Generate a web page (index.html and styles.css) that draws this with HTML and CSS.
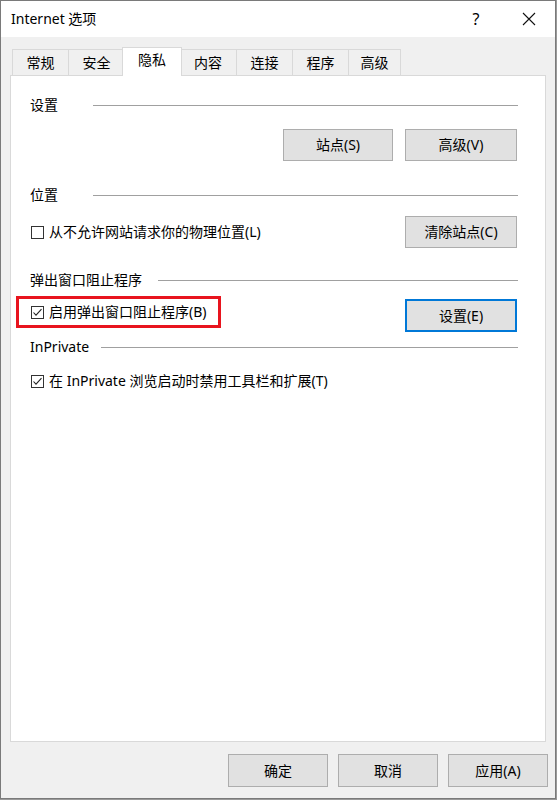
FILE: index.html
```html
<!DOCTYPE html>
<html lang="zh-CN">
<head>
<meta charset="utf-8">
<title>Internet 选项</title>
<link rel="stylesheet" href="styles.css">
</head>
<body>
<div class="window">
  <div class="titlebar">
    <span class="title">Internet 选项</span>
    <span class="help">?</span>
    <span class="close"><svg width="14" height="14" viewBox="0 0 14 14"><path d="M1 1 L13 13 M13 1 L1 13" stroke="#111" stroke-width="1.1" fill="none"/></svg></span>
  </div>
  <div class="client">
    <div class="tabs">
      <div class="tab">常规</div>
      <div class="tab">安全</div>
      <div class="tab active">隐私</div>
      <div class="tab">内容</div>
      <div class="tab">连接</div>
      <div class="tab">程序</div>
      <div class="tab last">高级</div>
    </div>
    <div class="panel">
      <div class="group-head"><span class="label wide">设置</span><span class="rule"></span></div>
      <div class="btn-row">
        <button class="btn site">站点(S)</button>
        <button class="btn">高级(V)</button>
      </div>

      <div class="group-head head-loc"><span class="label wide">位置</span><span class="rule"></span></div>
      <div class="opt-row row-loc">
        <label class="check"><span class="box"></span><span>从不允许网站请求你的物理位置(L)</span></label>
        <button class="btn">清除站点(C)</button>
      </div>

      <div class="group-head head-popup"><span class="label gap16">弹出窗口阻止程序</span><span class="rule"></span></div>
      <div class="opt-row row-popup">
        <label class="check highlight"><span class="box checked"><svg width="13" height="13" viewBox="0 0 13 13"><path d="M2.5 6.5 L5 9.2 L10.5 3.2" stroke="#222" stroke-width="1.1" fill="none"/></svg></span><span>启用弹出窗口阻止程序(B)</span></label>
        <button class="btn focused">设置(E)</button>
      </div>

      <div class="group-head head-private"><span class="label gap12">InPrivate</span><span class="rule"></span></div>
      <div class="opt-row row-private">
        <label class="check"><span class="box checked"><svg width="13" height="13" viewBox="0 0 13 13"><path d="M2.5 6.5 L5 9.2 L10.5 3.2" stroke="#222" stroke-width="1.1" fill="none"/></svg></span><span>在 InPrivate 浏览启动时禁用工具栏和扩展(T)</span></label>
      </div>
    </div>
    <div class="footer">
      <button class="btn foot">确定</button>
      <button class="btn foot">取消</button>
      <button class="btn foot">应用(A)</button>
    </div>
  </div>
</div>
</body>
</html>
```

FILE: styles.css
```css
* { box-sizing: border-box; }
html, body { margin: 0; padding: 0; }
body {
  background: #9a9a9a;
  width: 557px;
  height: 800px;
  font-family: "Noto Sans", "Noto Sans CJK SC", sans-serif;
  font-size: 14px;
  color: #000;
}
.window {
  width: 556px;
  height: 799px;
  border: 1px solid #7a7a7a;
  background: #f0f0f0;
  display: flex;
  flex-direction: column;
}
.titlebar {
  height: 36px;
  background: #fff;
  display: flex;
  align-items: center;
  padding-left: 10px;
  padding-right: 3px;
  flex-shrink: 0;
}
.title { line-height: 20px; }
.help {
  margin-left: auto;
  width: 40px;
  text-align: center;
  font-size: 16px;
  line-height: 20px;
  margin-right: 10px;
}
.close {
  width: 46px;
  height: 36px;
  display: flex;
  align-items: center;
  justify-content: center;
}
.client {
  flex: 1;
  display: flex;
  flex-direction: column;
}
.tabs {
  display: flex;
  align-items: flex-end;
  height: 38px;
  padding-top: 10px;
  margin-left: 11px;
}
.tab {
  width: 56px;
  height: 26px;
  border: 1px solid #d9d9d9;
  border-bottom: none;
  border-right: none;
  background: #f0f0f0;
  display: flex;
  align-items: center;
  justify-content: center;
  line-height: 20px;
  padding-top: 1px;
}
.tab.last { border-right: 1px solid #d9d9d9; width: 53px; }
.tab.active {
  width: 60px;
  height: 29px;
  margin: 0 -2px -1px -2px;
  background: #fff;
  border-right: 1px solid #d9d9d9;
  position: relative;
  z-index: 1;
  padding-top: 0;
  padding-bottom: 4px;
}
.tab.active + .tab { border-left: none; }
.panel {
  margin-left: 9px;
  width: 536px;
  height: 667px;
  background: #fff;
  border: 1px solid #d9d9d9;
  padding: 19px 28px 0 19px;
  display: flex;
  flex-direction: column;
}
.group-head {
  display: flex;
  align-items: center;
  height: 20px;
  margin-right: -1px;
}
.label { line-height: 20px; white-space: nowrap; }
.label.wide { width: 63px; }
.label.gap16 { margin-right: 16px; }
.label.gap12 { margin-right: 12px; }
.rule {
  flex: 1;
  height: 1px;
  background: #a0a0a0;
}
.btn {
  font-family: inherit;
  font-size: 14px;
  color: #000;
  background: #e1e1e1;
  border: 1px solid #adadad;
  border-radius: 0;
  height: 32px;
  width: 112px;
  padding: 0;
  line-height: 20px;
  margin: 0;
}
.btn.site { width: 110px; }
.btn.focused {
  border: 2px solid #0078d7;
  height: 33px;
}
.btn-row {
  display: flex;
  justify-content: flex-end;
  gap: 12px;
  margin-top: 14px;
}
.head-loc { margin-top: 24px; }
.opt-row {
  display: flex;
  justify-content: space-between;
  align-items: center;
}
.row-loc { margin-top: 11px; }
.head-popup { margin-top: 22px; }
.row-popup { margin-top: 9px; align-items: flex-start; }
.head-private { margin-top: 5px; }
.row-private { margin-top: 14px; }
.check {
  display: flex;
  align-items: center;
  gap: 5px;
  line-height: 20px;
  margin-left: 1px;
  white-space: nowrap;
}
.box {
  width: 13px;
  height: 13px;
  border: 1px solid #333;
  background: #fff;
  position: relative;
  flex-shrink: 0;
}
.box svg {
  position: absolute;
  left: -1px;
  top: -1px;
}
.check.highlight {
  border: 3px solid #e8141e;
  padding: 3px 11px 3px 12px;
  margin-left: -14px;
  margin-top: -3px;
}
.footer {
  display: flex;
  justify-content: flex-end;
  gap: 10px;
  margin-top: 12px;
  padding-right: 7px;
}
.btn.foot {
  width: 100px;
  height: 33px;
}
```
